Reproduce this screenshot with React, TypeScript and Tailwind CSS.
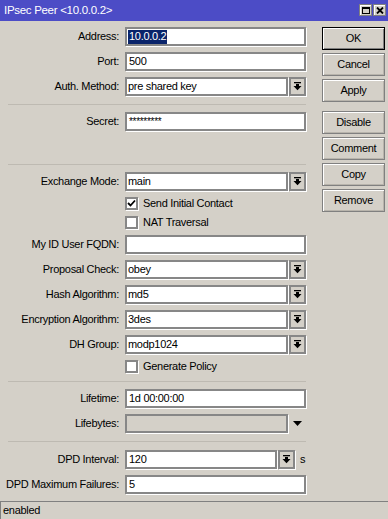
import React from "react";

const font = { fontFamily: '"Liberation Sans", Arial, sans-serif' };

function DropIcon() {
  return (
    <svg width="9" height="9" viewBox="0 0 9 9" className="block">
      <rect x="1" y="0" width="7" height="1.3" fill="#000" />
      <rect x="3" y="2" width="3" height="2" fill="#000" />
      <polygon points="0.5,4 8.5,4 4.5,8.2" fill="#000" />
    </svg>
  );
}

function Label({ text }: { text: string }) {
  return (
    <div className="w-[119px] shrink-0 mr-[6px] text-right text-black whitespace-nowrap">{text}</div>
  );
}

function Box({ w, children, disabled }: { w: string; children?: React.ReactNode; disabled?: boolean }) {
  return (
    <div
      className={`${w} h-[19px] border-2 border-[#878787] shadow-[1px_1px_0_#ffffff] ${
        disabled ? "bg-[#d4d0c8]" : "bg-white"
      } flex items-center pl-[1px] text-black whitespace-nowrap overflow-hidden`}
    >
      {children}
    </div>
  );
}

function DropBtn() {
  return (
    <div className="w-[17px] h-[19px] border-2 border-[#878787] bg-[#d4d0c8] shadow-[1px_1px_0_#ffffff] flex items-center justify-center">
      <DropIcon />
    </div>
  );
}

function TextRow({ label, value, children }: { label: string; value?: React.ReactNode; children?: React.ReactNode }) {
  return (
    <div className="h-[25px] flex items-center">
      <Label text={label} />
      {children ?? <Box w="w-[181px]">{value}</Box>}
    </div>
  );
}

function SelectRow({ label, value }: { label: string; value: string }) {
  return (
    <TextRow label={label}>
      <div className="flex items-center gap-[1px]">
        <Box w="w-[163px]">{value}</Box>
        <DropBtn />
      </div>
    </TextRow>
  );
}

function Check({ label, checked }: { label: string; checked?: boolean }) {
  return (
    <div className="h-[19px] flex items-center pl-[125px]">
      <div className="w-[13px] h-[13px] border-2 border-[#878787] bg-white shadow-[1px_1px_0_#ffffff] flex items-center justify-center">
        {checked && (
          <svg width="9" height="9" viewBox="0 0 9 9" className="block">
            <polyline points="1,4 3.5,6.5 8,1.5" fill="none" stroke="#000" strokeWidth="1.8" />
          </svg>
        )}
      </div>
      <span className="ml-[5px] text-black whitespace-nowrap">{label}</span>
    </div>
  );
}

function Sep({ h }: { h: string }) {
  return (
    <div className={`${h} flex items-center pl-[8px]`}>
      <div className="w-[298px] h-px bg-[#bebab2]" />
    </div>
  );
}

function Btn({ text, def }: { text: string; def?: boolean }) {
  return (
    <div
      className={`w-[63px] h-[23px] flex items-center justify-center text-black border ${
        def
          ? "border-black shadow-[inset_1px_1px_0_#ffffff,inset_-1px_-1px_0_#808080]"
          : "border-[#808080] shadow-[inset_1px_1px_0_#ffffff,inset_-1px_-1px_0_#b8b4ac]"
      }`}
    >
      {text}
    </div>
  );
}

export default function App() {
  return (
    <div
      className="w-[388px] h-[519px] bg-[#d4d0c8] flex flex-col overflow-hidden text-[11px] tracking-[-0.3px] leading-none"
      style={font}
    >
      <div className="h-[21px] shrink-0 bg-[#4c4cc6] flex items-center justify-between pl-[4px] pr-[2px]">
        <span className="text-white text-[11.5px]">IPsec Peer &lt;10.0.0.2&gt;</span>
        <div className="flex gap-[1px] mt-[-1px]">
          <div className="w-[13px] h-[12px] bg-[#d4d0c8] border border-[#808080] shadow-[inset_1px_1px_0_#ffffff] flex items-center justify-center">
            <div className="w-[8px] h-[7px] border border-black border-t-2" />
          </div>
          <div className="w-[13px] h-[12px] bg-[#d4d0c8] border border-[#808080] shadow-[inset_1px_1px_0_#ffffff] flex items-center justify-center">
            <svg width="8" height="7" viewBox="0 0 8 7" className="block">
              <path d="M1 0.5 L7 6.5 M7 0.5 L1 6.5" stroke="#000" strokeWidth="1.8" />
            </svg>
          </div>
        </div>
      </div>

      <div className="flex-1 flex">
        <div className="w-[316px] pt-[3px] flex flex-col">
          <TextRow
            label="Address:"
            value={<span className="bg-[#0a246a] text-white px-[1px] h-[14px] flex items-center">10.0.0.2</span>}
          />
          <TextRow label="Port:" value={<span className="pl-[1px]">500</span>} />
          <SelectRow label="Auth. Method:" value="pre shared key" />
          <Sep h="h-[10px]" />
          <TextRow label="Secret:" value={<span className="pl-[1px] text-[10px]">*********</span>} />
          <div className="h-[25px]" />
          <Sep h="h-[10px]" />
          <SelectRow label="Exchange Mode:" value="main" />
          <Check label="Send Initial Contact" checked />
          <Check label="NAT Traversal" />
          <TextRow label="My ID User FQDN:" value="" />
          <SelectRow label="Proposal Check:" value="obey" />
          <SelectRow label="Hash Algorithm:" value="md5" />
          <SelectRow label="Encryption Algorithm:" value="3des" />
          <SelectRow label="DH Group:" value="modp1024" />
          <Check label="Generate Policy" />
          <Sep h="h-[10px]" />
          <TextRow label="Lifetime:" value={<span className="pl-[1px]">1d 00:00:00</span>} />
          <TextRow label="Lifebytes:">
            <div className="flex items-center">
              <Box w="w-[163px]" disabled />
              <svg width="9" height="5" viewBox="0 0 9 5" className="block ml-[5px]">
                <polygon points="0,0 9,0 4.5,5" fill="#000" />
              </svg>
            </div>
          </TextRow>
          <Sep h="h-[11px]" />
          <TextRow label="DPD Interval:">
            <div className="flex items-center gap-[1px]">
              <Box w="w-[152px]"><span className="pl-[1px]">120</span></Box>
              <DropBtn />
              <span className="ml-[4px] text-black">s</span>
            </div>
          </TextRow>
          <TextRow label="DPD Maximum Failures:" value={<span className="pl-[1px]">5</span>} />
        </div>

        <div className="pt-[6px] pl-[6px] flex flex-col">
          <div className="flex flex-col gap-[3px]">
            <Btn text="OK" def />
            <Btn text="Cancel" />
            <Btn text="Apply" />
          </div>
          <div className="flex flex-col gap-[3px] mt-[9px]">
            <Btn text="Disable" />
            <Btn text="Comment" />
            <Btn text="Copy" />
            <Btn text="Remove" />
          </div>
        </div>
      </div>

      <div className="h-[18px] shrink-0 border-t border-l border-[#808080] flex items-center pl-[2px] text-black">
        enabled
      </div>
    </div>
  );
}
